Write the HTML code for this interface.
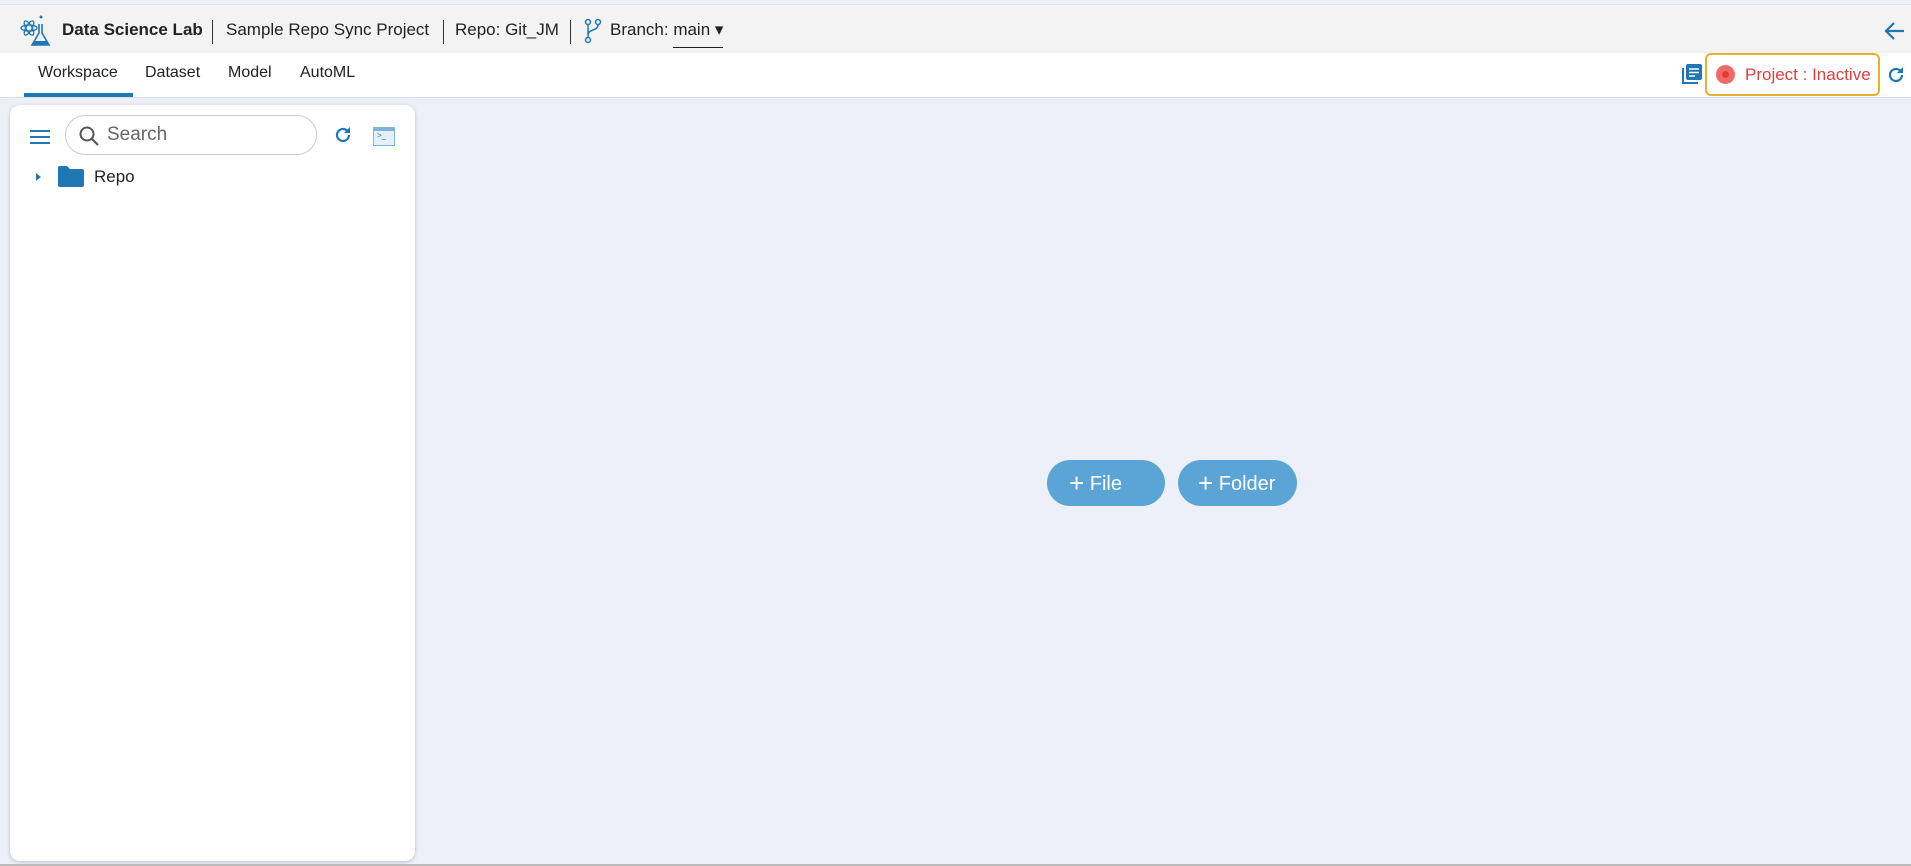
<!DOCTYPE html>
<html><head><meta charset="utf-8"><style>
*{box-sizing:border-box;margin:0;padding:0}
body{width:1911px;height:866px;overflow:hidden;font-family:"Liberation Sans",sans-serif;background:#edf0f8;position:relative;color:#222}
.top{position:absolute;left:0;top:4px;width:1911px;height:49px;background:#f3f3f3;border-top:1px solid #e4e4e4}
.tabs{position:absolute;left:0;top:53px;width:1911px;height:45px;background:#fff;border-bottom:1px solid #d8dde6}
.t{position:absolute;font-size:17px;top:0;line-height:49px;white-space:nowrap}
.sep{position:absolute;top:15px;width:1px;height:24px;background:#333}
.tab{position:absolute;top:11px;font-size:16px}
.panel{position:absolute;left:10px;top:105px;width:405px;height:756px;background:#fff;border-radius:10px;box-shadow:0 1px 4px rgba(0,0,0,.2)}
.btn{position:absolute;top:460px;height:46px;border-radius:23px;background:#5ba4d6;color:#fff;font-size:20px;line-height:46px}
</style></head><body>
<div class="top">
<svg style="position:absolute;left:20px;top:9px" width="32" height="34" viewBox="0 0 32 34"><ellipse cx="9" cy="14" rx="8" ry="3" fill="none" stroke="#1f77b4" stroke-width="1.3"/><ellipse cx="9" cy="14" rx="8" ry="3" transform="rotate(60 9 14)" fill="none" stroke="#1f77b4" stroke-width="1.3"/><ellipse cx="9" cy="14" rx="8" ry="3" transform="rotate(-60 9 14)" fill="none" stroke="#1f77b4" stroke-width="1.3"/><path d="M19 10v9l-7 12h17l-7-12v-9" fill="none" stroke="#1f77b4" stroke-width="1.6"/><path d="M14 27h13l2 4H12z" fill="#1f77b4"/><circle cx="21" cy="3" r="1.5" fill="#1f77b4"/></svg>
<div class="t" style="left:62px;font-weight:bold">Data Science Lab</div>
<div class="sep" style="left:212px"></div>
<div class="t" style="left:226px">Sample Repo Sync Project</div>
<div class="sep" style="left:443px"></div>
<div class="t" style="left:455px">Repo: Git_JM</div>
<div class="sep" style="left:570px"></div>
<svg style="position:absolute;left:584px;top:13px" width="18" height="26" viewBox="0 0 18 26"><circle cx="4" cy="4" r="2.5" fill="none" stroke="#1f77b4" stroke-width="1.5"/><circle cx="14" cy="4" r="2.5" fill="none" stroke="#1f77b4" stroke-width="1.5"/><circle cx="4" cy="22" r="2.5" fill="none" stroke="#1f77b4" stroke-width="1.5"/><path d="M4 7v12M14 7c0 6-10 4-10 10" fill="none" stroke="#1f77b4" stroke-width="1.5"/></svg>
<div class="t" style="left:610px">Branch: <span style="border-bottom:1px solid #222;padding-bottom:8px">main ▾</span></div>
<svg style="position:absolute;left:1884px;top:15px" width="22" height="22" viewBox="0 0 22 22"><path d="M20 11H3M10 3l-8 8 8 8" fill="none" stroke="#1f77b4" stroke-width="2.2"/></svg>
</div>
<div class="tabs">
<div class="tab" style="left:38px">Workspace</div>
<div style="position:absolute;left:24px;top:40px;width:109px;height:4px;background:#1f77b4"></div>
<div class="tab" style="left:145px">Dataset</div>
<div class="tab" style="left:228px">Model</div>
<div class="tab" style="left:300px">AutoML</div>
<svg style="position:absolute;left:1681px;top:10px" width="22" height="22" viewBox="0 0 22 22"><path d="M2 5v15h15" fill="none" stroke="#1f77b4" stroke-width="2"/><rect x="5" y="1" width="16" height="16" rx="2" fill="#1f77b4"/><path d="M8 6h10M8 9.5h10M8 13h6" stroke="#fff" stroke-width="1.6"/></svg>
<div style="position:absolute;left:1705px;top:0;width:175px;height:43px;border:2px solid #e8b12c;border-radius:6px;color:#d9413f;font-size:17px;line-height:39px;padding-left:38px">Project : Inactive</div>
<div style="position:absolute;left:1716px;top:12px;width:19px;height:19px;border-radius:50%;background:#f06b63"></div>
<div style="position:absolute;left:1722px;top:18px;width:7px;height:7px;border-radius:50%;background:#e63a36"></div>
<svg style="position:absolute;left:1886px;top:12px" width="20" height="20" viewBox="0 0 20 20"><path d="M16 10a6 6 0 1 1-2-4.5" fill="none" stroke="#1f77b4" stroke-width="2.2"/><path d="M17 2v6h-6z" fill="#1f77b4"/></svg>
</div>
<div class="panel">
<svg style="position:absolute;left:20px;top:24px" width="20" height="16"><path d="M0 2h20M0 8h20M0 14h20" stroke="#1f77b4" stroke-width="2"/></svg>
<div style="position:absolute;left:55px;top:10px;width:252px;height:40px;border:1px solid #ccc;border-radius:20px"></div>
<svg style="position:absolute;left:68px;top:20px" width="22" height="22" viewBox="0 0 22 22"><circle cx="9" cy="9" r="6.5" fill="none" stroke="#555" stroke-width="2"/><path d="M14 14l6 6" stroke="#555" stroke-width="2.2"/></svg>
<div style="position:absolute;left:97px;top:19px;font-size:19px;color:#666">Search</div>
<svg style="position:absolute;left:323px;top:20px" width="20" height="20" viewBox="0 0 20 20"><path d="M16 10a6 6 0 1 1-2-4.5" fill="none" stroke="#1f77b4" stroke-width="2.2"/><path d="M17 2v6h-6z" fill="#1f77b4"/></svg>
<div style="position:absolute;left:363px;top:22px;width:22px;height:19px;border:1px solid #7db5dc;background:#e3f0fa"><div style="height:3px;background:#7db5dc"></div><div style="font-size:8px;color:#1f77b4;padding-left:3px">&gt;_</div></div>
<svg style="position:absolute;left:25px;top:67px" width="8" height="10"><path d="M1 1l5 4-5 4z" fill="#1f77b4"/></svg>
<svg style="position:absolute;left:48px;top:61px" width="26" height="21" viewBox="0 0 26 21"><path d="M0 2q0-2 2-2h7l3 3h12q2 0 2 2v14q0 2-2 2H2q-2 0-2-2z" fill="#1f77b4"/></svg>
<div style="position:absolute;left:84px;top:62px;font-size:17px">Repo</div>
</div>
<div class="btn" style="left:1047px;width:118px;padding-left:22px"><b style="font-size:26px;font-weight:normal;vertical-align:-2px">+</b> File</div>
<div class="btn" style="left:1178px;width:119px;padding-left:20px"><b style="font-size:26px;font-weight:normal;vertical-align:-2px">+</b> Folder</div>
<div style="position:absolute;left:0;top:864px;width:1911px;height:2px;background:#bbb"></div>
</body></html>
